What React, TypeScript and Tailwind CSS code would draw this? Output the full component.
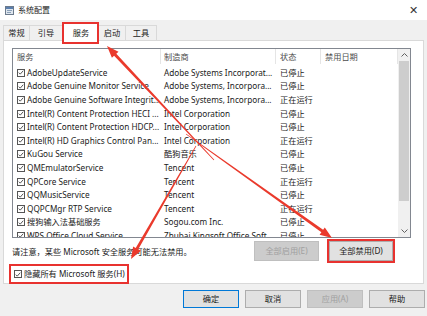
import React from "react";

const rows: [string, string, string][] = [
  ["AdobeUpdateService", "Adobe Systems Incorporat...", "已停止"],
  ["Adobe Genuine Monitor Service", "Adobe Systems, Incorpora...", "已停止"],
  ["Adobe Genuine Software Integrit...", "Adobe Systems, Incorpora...", "正在运行"],
  ["Intel(R) Content Protection HECI ...", "Intel Corporation", "已停止"],
  ["Intel(R) Content Protection HDCP...", "Intel Corporation", "已停止"],
  ["Intel(R) HD Graphics Control Pan...", "Intel Corporation", "正在运行"],
  ["KuGou Service", "酷狗音乐", "已停止"],
  ["QMEmulatorService", "Tencent", "已停止"],
  ["QPCore Service", "Tencent", "正在运行"],
  ["QQMusicService", "Tencent", "已停止"],
  ["QQPCMgr RTP Service", "Tencent", "正在运行"],
  ["搜狗输入法基础服务", "Sogou.com Inc.", "已停止"],
  ["WPS Office Cloud Service", "Zhubai Kingsoft Office Soft...", "已停止"],
];

function Check() {
  return (
    <span className="w-[8px] h-[8px] border border-[#555] bg-white flex items-center justify-center shrink-0">
      <svg width="7" height="7" viewBox="0 0 8 8">
        <path d="M1 4.2 L3 6.2 L7 1.6" fill="none" stroke="#333" strokeWidth="1.1" />
      </svg>
    </span>
  );
}

function arrow(x1: number, y1: number, x2: number, y2: number, tail = 0.4, shaft = 1.5, head = 4.5, hl = 12) {
  const dx = x2 - x1, dy = y2 - y1;
  const L = Math.hypot(dx, dy);
  const ux = dx / L, uy = dy / L;
  const nx = -uy, ny = ux;
  const bx = x2 - ux * hl, by = y2 - uy * hl;
  const pts = [
    [x1 + nx * tail, y1 + ny * tail],
    [bx + nx * shaft, by + ny * shaft],
    [bx + nx * head, by + ny * head],
    [x2, y2],
    [bx - nx * head, by - ny * head],
    [bx - nx * shaft, by - ny * shaft],
    [x1 - nx * tail, y1 - ny * tail],
  ];
  return pts.map((p) => p.map((v) => v.toFixed(1)).join(",")).join(" ");
}

export default function App() {
  return (
    <div className="relative w-[427px] h-[316px] overflow-hidden bg-[#f0f0f0] text-[#1a1a1a] font-['Noto_Sans','Noto_Sans_CJK_SC',sans-serif] text-[8.2px] leading-[12px]">
      {/* title bar */}
      <div className="h-[20px] bg-white flex items-center pl-[5px] pr-[9px]">
        <svg width="9" height="9" viewBox="0 0 9 9" className="shrink-0">
          <rect x="0.5" y="0.5" width="8" height="8" fill="#dfe6ee" stroke="#6b7a8c" />
          <rect x="1" y="1" width="7" height="2" fill="#5b7fae" />
          <rect x="2" y="4" width="5" height="1" fill="#8aa0b8" />
          <rect x="2" y="6" width="4" height="1" fill="#8aa0b8" />
        </svg>
        <span className="ml-[4px] text-[8px] text-[#222]">系统配置</span>
        <span className="ml-auto text-[11px] text-[#333] font-light">✕</span>
      </div>
      {/* tabs */}
      <div className="h-[20px] flex items-end pl-[3px]">
        <div className="h-[15px] w-[27px] flex items-center justify-center border border-b-0 border-[#d9d9d9] bg-[#f0f0f0]">常规</div>
        <div className="h-[15px] w-[33px] flex items-center justify-center border border-b-0 border-l-0 border-[#d9d9d9] bg-[#f0f0f0]">引导</div>
        <div className="relative h-[18px] w-[36px] flex items-center justify-center bg-white border border-b-0 border-[#d9d9d9] -mb-px z-10">
          服务
          <div className="absolute left-[-2px] top-[-2px] w-[37px] h-[22px] border-2 border-[#e8322f]" />
        </div>
        <div className="h-[15px] w-[27px] flex items-center justify-center border border-b-0 border-l-0 border-[#d9d9d9] bg-[#f0f0f0]">启动</div>
        <div className="h-[15px] w-[31px] flex items-center justify-center border border-b-0 border-l-0 border-[#d9d9d9] bg-[#f0f0f0]">工具</div>
      </div>
      {/* panel */}
      <div className="mx-[3px] h-[244px] bg-white border border-[#d9d9d9] pt-[7px] pl-[8px]">
        <div className="w-[399px] h-[190px] border border-[#828790] flex overflow-hidden">
          <div className="flex-1 flex flex-col overflow-hidden">
            <div className="h-[15px] flex items-center text-[#4d4d4d] shrink-0">
              <div className="w-[148px] h-full pl-[4px] flex items-center border-r border-[#e5e5e5]">服务</div>
              <div className="w-[115px] h-full pl-[3px] flex items-center border-r border-[#e5e5e5]">制造商</div>
              <div className="w-[45px] h-full pl-[4px] flex items-center border-r border-[#e5e5e5]">状态</div>
              <div className="flex-1 h-full pl-[4px] flex items-center border-r border-[#e5e5e5]">禁用日期</div>
            </div>
            <div className="pt-[2px] flex flex-col">
              {rows.map(([n, m, s], i) => (
                <div key={i} className="h-[13.6px] flex items-center shrink-0 whitespace-nowrap">
                  <div className="w-[148px] h-[13.6px] pl-[4px] flex items-center gap-[2px] overflow-hidden">
                    <Check />
                    <span>{n}</span>
                  </div>
                  <div className="w-[115px] h-[13.6px] pl-[3px] flex items-center overflow-hidden">{m}</div>
                  <div className="w-[45px] pl-[4px]">{s}</div>
                  <div className="flex-1" />
                </div>
              ))}
            </div>
          </div>
          <div className="w-[12px] bg-[#f0f0f0] flex flex-col items-center shrink-0">
            <div className="h-[12px] flex items-center justify-center">
              <svg width="7" height="4" viewBox="0 0 7 4"><path d="M0.5 3.5 L3.5 0.5 L6.5 3.5" fill="none" stroke="#606060" /></svg>
            </div>
            <div className="w-[10px] h-[140px] bg-[#cdcdcd]" />
            <div className="flex-1" />
            <div className="h-[12px] flex items-center justify-center">
              <svg width="7" height="4" viewBox="0 0 7 4"><path d="M0.5 0.5 L3.5 3.5 L6.5 0.5" fill="none" stroke="#606060" /></svg>
            </div>
          </div>
        </div>
        <div className="h-[26px] flex items-center pr-[30px]">
          <span className="mt-[1px]">请注意，某些 Microsoft 安全服务可能无法禁用。</span>
          <div className="ml-auto w-[65px] h-[20px] bg-[#cccccc] border border-[#bfbfbf] flex items-center justify-center text-[#a0a0a0]">全部启用(E)</div>
          <div className="relative ml-[10px] w-[64px] h-[20px] bg-[#e1e1e1] border border-[#adadad] flex items-center justify-center">
            全部禁用(D)
            <div className="absolute -left-[3px] -top-[3px] -right-[3px] -bottom-[3px] border-2 border-[#e8322f]" />
          </div>
        </div>
        <div className="h-[20px] flex items-center">
          <div className="relative flex items-center gap-[2px] pl-[2px]">
            <Check />
            <span>隐藏所有 Microsoft 服务(H)</span>
            <div className="absolute -left-[3px] -top-[4px] w-[120px] h-[20px] border-2 border-[#e8322f]" />
          </div>
        </div>
      </div>
      {/* bottom buttons */}
      <div className="flex justify-end gap-[6px] pr-[2px] pt-[6px]">
        <div className="w-[56px] h-[18px] bg-[#e1e1e1] border border-[#0078d7] flex items-center justify-center">确定</div>
        <div className="w-[56px] h-[18px] bg-[#e1e1e1] border border-[#adadad] flex items-center justify-center">取消</div>
        <div className="w-[56px] h-[18px] bg-[#cccccc] border border-[#bfbfbf] flex items-center justify-center text-[#a0a0a0]">应用(A)</div>
        <div className="w-[56px] h-[18px] bg-[#e1e1e1] border border-[#adadad] flex items-center justify-center">帮助</div>
      </div>
      {/* annotation arrows */}
      <svg className="absolute inset-0 pointer-events-none" width="427" height="316" viewBox="0 0 427 316">
        <polygon points={arrow(214, 160, 107, 46)} fill="#ea3a2c" />
        <polygon points={arrow(196, 146, 131, 259)} fill="#ea3a2c" />
        <polygon points={arrow(186, 134, 332, 238)} fill="#ea3a2c" />
      </svg>
    </div>
  );
}
